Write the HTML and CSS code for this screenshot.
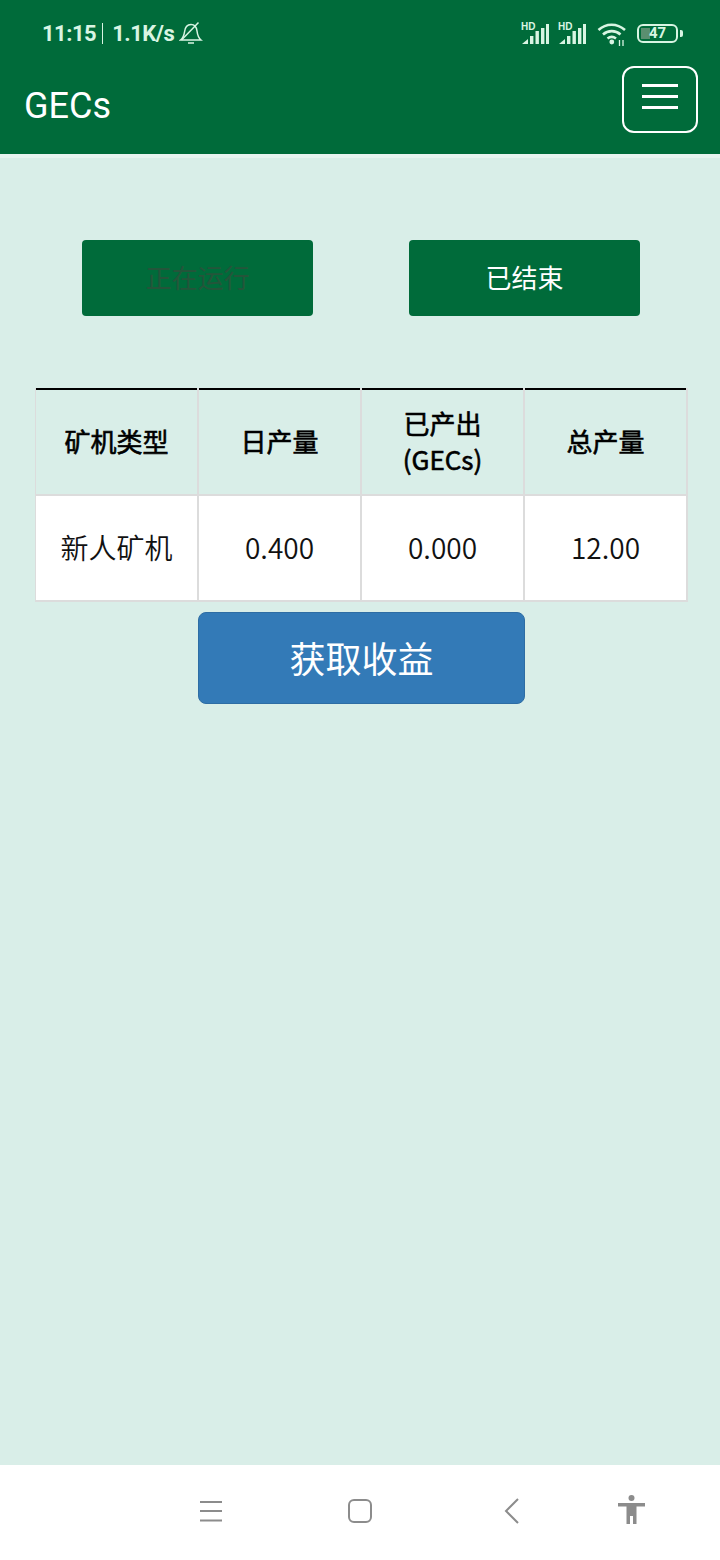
FILE: index.html
```html
<!DOCTYPE html>
<html lang="zh-CN">
<head>
    <meta charset="UTF-8">
    <meta name="viewport" content="width=device-width, initial-scale=1.0">
    <title>GECs</title>
    <link rel="stylesheet" href="styles.css">
</head>
<body>
    <div class="page">
        <div class="header">
            <div class="status">
                <div class="status-left">
                    <span class="time">11:15</span>
                    <span class="divider"></span>
                    <span class="speed">1.1K/s</span>
                    <svg class="bell" width="24" height="24" viewBox="0 0 24 24" fill="none" stroke="currentColor" stroke-width="1.500">
                        <path d="M1.500 19 C4 17 5 14.500 5.500 11 C6 6.500 8.500 3.500 12 3.500 C15.500 3.500 17.500 6 18 10 C18.500 14 19.500 17 22 19 Z"/>
                        <path d="M9 22 H15"/>
                        <path d="M2.500 19 L19.500 1.500"/>
                    </svg>
                </div>
                <div class="status-right">
                    <span class="signal">
                        <span class="hd">HD</span>
                        <svg width="28" height="20" viewBox="0 0 28 20" fill="currentColor">
                            <path d="M1 20 L7 15 V20 Z"/>
                            <rect x="9" y="12" width="3.400" height="8"/>
                            <rect x="14.500" y="7" width="3.400" height="13"/>
                            <rect x="20" y="4" width="3.400" height="16"/>
                            <rect x="25" y="0" width="3" height="20"/>
                        </svg>
                    </span>
                    <span class="signal">
                        <span class="hd">HD</span>
                        <svg width="28" height="20" viewBox="0 0 28 20" fill="currentColor">
                            <path d="M1 20 L7 15 V20 Z"/>
                            <rect x="9" y="12" width="3.400" height="8"/>
                            <rect x="14.500" y="7" width="3.400" height="13"/>
                            <rect x="20" y="4" width="3.400" height="16"/>
                            <rect x="25" y="0" width="3" height="20"/>
                        </svg>
                    </span>
                    <svg class="wifi" width="31" height="24" viewBox="0 0 31 24" fill="none" stroke="currentColor" stroke-width="2.600">
                        <path d="M1.500 8 C9 1 20 1 28 8"/>
                        <path d="M6 12.500 C11 8 18.500 8 23.500 12.500"/>
                        <path d="M10.500 16.500 C13 14.500 16.500 14.500 19 16.500"/>
                        <circle cx="14.800" cy="20" r="2.400" fill="currentColor" stroke="none"/>
                        <path d="M22.500 18 V24 M26 18 V24" stroke-width="1.300"/>
                    </svg>
                    <div class="battery">
                        <div class="battery-box">
                            <span class="battery-fill"></span>
                            <span class="battery-num">47</span>
                        </div>
                        <span class="battery-cap"></span>
                    </div>
                </div>
            </div>
            <div class="nav">
                <div class="brand">GECs</div>
                <div class="toggle">
                    <span></span>
                    <span></span>
                    <span></span>
                </div>
            </div>
        </div>

        <div class="main">
            <div class="tabs">
                <div class="tab tab-active">正在运行</div>
                <div class="tab">已结束</div>
            </div>

            <div class="table">
                <div class="cell head">矿机类型</div>
                <div class="cell head">日产量</div>
                <div class="cell head">已产出<br>(GECs)</div>
                <div class="cell head">总产量</div>
                <div class="cell">新人矿机</div>
                <div class="cell">0.400</div>
                <div class="cell">0.000</div>
                <div class="cell">12.00</div>
            </div>

            <div class="action">
                <div class="btn-get">获取收益</div>
            </div>
        </div>

        <div class="bottom">
            <svg class="key-menu" width="24" height="22" viewBox="0 0 24 22" fill="none" stroke="#8c8c8c" stroke-width="2">
                <path d="M1 2 H23 M1 11 H23 M1 20.500 H23"/>
            </svg>
            <svg class="key-home" width="26" height="26" viewBox="0 0 26 26" fill="none" stroke="#8c8c8c" stroke-width="2">
                <rect x="2" y="2" width="22" height="22" rx="5"/>
            </svg>
            <svg class="key-back" width="16" height="26" viewBox="0 0 16 26" fill="none" stroke="#8c8c8c" stroke-width="2">
                <path d="M14 1 L2 13 L14 25"/>
            </svg>
            <svg class="key-access" width="27" height="30" viewBox="0 0 27 30" fill="#8c8c8c">
                <circle cx="13.500" cy="3" r="3"/>
                <path d="M0 8 H27 V11.500 H18.500 V29 H15 V21 H12 V29 H8.500 V11.500 H0 Z"/>
            </svg>
        </div>
    </div>
</body>
</html>
```

FILE: styles.css
```css
/*init*/
html,body{
    margin: 0;
    padding: 0;
}
body{
    font-family: "Noto Sans CJK SC", "Noto Sans", sans-serif;
    color: #000;
}

.page{
    width: 720px;
    height: 1560px;
    background-color: #d9eee8;
    display: flex;
    flex-direction: column;
    overflow: hidden;
}

/*1.header*/
.header{
    height: 154px;
    background-color: #006b3a;
    border-bottom: 4px solid #e7f4f0;
    flex-shrink: 0;
}
.status{
    height: 66px;
    padding: 0 37px 0 42px;
    display: flex;
    justify-content: space-between;
    align-items: center;
    color: #d9f5e3;
}
.status-left{
    display: flex;
    align-items: center;
    font-family: Roboto, sans-serif;
    font-weight: 700;
    font-size: 22px;
    letter-spacing: -0.5px;
}
.divider{
    width: 1px;
    height: 21px;
    background-color: #d9f5e3;
    margin: 0 9px 0 6px;
}
.bell{
    margin-left: 5px;
}
.status-right{
    display: flex;
    align-items: center;
}
.signal{
    position: relative;
    width: 28px;
    height: 22px;
    margin-right: 9px;
    display: flex;
    align-items: flex-end;
}
.hd{
    position: absolute;
    left: 0;
    top: 0;
    font-family: "Liberation Sans", sans-serif;
    font-size: 10px;
    font-weight: bold;
    line-height: 9px;
}
.wifi{
    margin: 2px 0 0 2px;
}
.battery{
    display: flex;
    align-items: center;
    margin-left: 9px;
}
.battery-box{
    position: relative;
    width: 37px;
    height: 15px;
    border: 2px solid #d9f5e3;
    border-radius: 6px;
    display: flex;
    justify-content: center;
    align-items: center;
}
.battery-fill{
    position: absolute;
    left: 2px;
    top: 2px;
    bottom: 2px;
    width: 9px;
    background-color: #5a8f70;
}
.battery-num{
    position: relative;
    font-family: Roboto, sans-serif;
    font-weight: 700;
    font-size: 15px;
    line-height: 15px;
}
.battery-cap{
    width: 3px;
    height: 7px;
    margin-left: 2px;
    background-color: #d9f5e3;
    border-radius: 0 2px 2px 0;
}

/*2.nav*/
.nav{
    height: 88px;
    padding: 0 22px 0 24px;
    display: flex;
    justify-content: space-between;
    align-items: flex-start;
}
.brand{
    font-family: Roboto, sans-serif;
    font-size: 36px;
    line-height: 80px;
    color: #fff;
}
.toggle{
    box-sizing: border-box;
    width: 76px;
    height: 67px;
    padding-bottom: 7px;
    border: 2px solid #fff;
    border-radius: 12px;
    display: flex;
    flex-direction: column;
    justify-content: center;
    align-items: center;
    gap: 8px;
}
.toggle span{
    width: 36px;
    height: 3px;
    background-color: #fff;
}

/*3.main*/
.main{
    flex: 1;
    padding-top: 82px;
}
.tabs{
    padding-left: 82px;
    display: flex;
    gap: 96px;
}
.tab{
    width: 231px;
    height: 76px;
    line-height: 74px;
    text-align: center;
    font-size: 26px;
    color: #fff;
    background-color: #006b3a;
    border-radius: 4px;
}
.tab-active{
    color: #24553a;
}

/*4.table*/
.table{
    width: 653px;
    margin: 72px 0 0 35px;
    display: grid;
    grid-template-columns: 164px 163px 163px 163px;
    grid-template-rows: 108px 106px;
}
.cell{
    box-sizing: border-box;
    padding-bottom: 2px;
    display: flex;
    justify-content: center;
    align-items: center;
    text-align: center;
    font-size: 28px;
    font-weight: 350;
    line-height: 36px;
    color: #111;
    background-color: #fff;
    border-right: 2px solid #dcdcdc;
    border-bottom: 2px solid #dcdcdc;
}
.cell:nth-child(4n+1){
    border-left: 1px solid #dcdcdc;
}
.head{
    padding-bottom: 1px;
    font-size: 26px;
    font-weight: 400;
    color: #000;
    -webkit-text-stroke: 0.6px #000;
    background: #d9eee8 linear-gradient(#000, #000) no-repeat top / 100% 2px;
}

/*5.button*/
.action{
    padding: 10px 0 0 198px;
}
.btn-get{
    box-sizing: border-box;
    width: 327px;
    height: 92px;
    line-height: 88px;
    text-align: center;
    font-size: 36px;
    color: #fff;
    background-color: #337ab7;
    border: 1px solid #2e6da4;
    border-radius: 8px;
}

/*6.bottom keys*/
.bottom{
    height: 95px;
    padding-bottom: 3px;
    box-sizing: border-box;
    background-color: #fff;
    flex-shrink: 0;
    display: flex;
    align-items: center;
}
.key-menu{
    margin: 0 0 0 199px;
}
.key-home{
    margin: 0 0 0 124px;
}
.key-back{
    margin: 0 0 0 131px;
}
.key-access{
    margin: -3px 0 0 98px;
}
```
